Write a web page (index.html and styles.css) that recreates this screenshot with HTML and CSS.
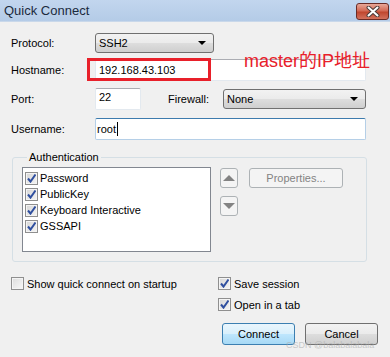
FILE: index.html
```html
<!DOCTYPE html>
<html lang="en">
<head>
    <meta charset="UTF-8">
    <meta name="viewport" content="width=device-width, initial-scale=1.0">
    <title>Quick Connect</title>
    <link rel="stylesheet" href="styles.css">
</head>
<body>
    <div class="window">
        <div class="titlebar">
            <span class="title">Quick Connect</span>
            <button class="close" type="button">
                <svg width="14" height="11" viewBox="0 0 14 11">
                    <path d="M2.5 1.5 L11.5 9.5 M11.5 1.5 L2.5 9.5" stroke="#4a3a38" stroke-width="4" stroke-linecap="round"/>
                    <path d="M2.5 1.5 L11.5 9.5 M11.5 1.5 L2.5 9.5" stroke="#ffffff" stroke-width="2" stroke-linecap="round"/>
                </svg>
            </button>
        </div>

        <div class="content">
            <div class="row row-protocol">
                <label class="label">Protocol:</label>
                <div class="select select-protocol"><span>SSH2</span><i class="arrow"></i></div>
            </div>
            <div class="row row-host">
                <label class="label">Hostname:</label>
                <div class="input input-wide">192.168.43.103</div>
            </div>
            <div class="row row-port">
                <label class="label">Port:</label>
                <div class="input input-port">22</div>
                <label class="label-fw">Firewall:</label>
                <div class="select select-fw"><span>None</span><i class="arrow"></i></div>
            </div>
            <div class="row row-user">
                <label class="label">Username:</label>
                <div class="input input-wide focused">root<span class="caret"></span></div>
            </div>

            <fieldset class="group">
                <legend>Authentication</legend>
                <div class="group-body">
                    <div class="list">
                        <div class="item"><span class="cb checked"></span>Password</div>
                        <div class="item"><span class="cb checked"></span>PublicKey</div>
                        <div class="item"><span class="cb checked"></span>Keyboard Interactive</div>
                        <div class="item"><span class="cb checked"></span>GSSAPI</div>
                    </div>
                    <div class="arrows">
                        <button class="btn-small" type="button" disabled><i class="tri up"></i></button>
                        <button class="btn-small" type="button" disabled><i class="tri down"></i></button>
                    </div>
                    <button class="btn-props" type="button" disabled>Properties...</button>
                </div>
            </fieldset>

            <div class="options">
                <div class="opt"><span class="cb"></span>Show quick connect on startup</div>
                <div class="opt"><span class="cb checked"></span>Save session</div>
                <div class="opt opt-tab"><span class="cb checked"></span>Open in a tab</div>
            </div>

            <div class="actions">
                <button class="btn btn-default" type="button">Connect</button>
                <button class="btn" type="button">Cancel</button>
            </div>
        </div>

        <div class="mark-box"></div>
        <div class="mark-text">master的IP地址</div>
        <div class="watermark">CSDN @balabalabala</div>
    </div>
</body>
</html>
```

FILE: styles.css
```css
body {
    margin: 0;
    padding: 0;
    font-family: 'Liberation Sans', Arial, sans-serif;
    font-size: 11px;
    color: #000000;
    background: #f0f0f0;
}

.window {
    position: relative;
    width: 390px;
    height: 357px;
    overflow: hidden;
    background: #f0f0f0;
}

/* title bar */
.titlebar {
    height: 22px;
    display: flex;
    align-items: center;
    justify-content: space-between;
    padding: 0 1px 0 4px;
    background: linear-gradient(180deg, #c2d6ee, #b4cbe7);
    border-bottom: 1px solid #c9d8ea;
    box-sizing: border-box;
}

.title {
    font-size: 13px;
    color: #1b2a3d;
}

.close {
    width: 33px;
    height: 17px;
    margin-top: 1px;
    padding: 0;
    border: 1px solid #6a2b25;
    border-radius: 3px;
    background: linear-gradient(180deg, #e8a899 0%, #d36a55 45%, #c0472f 55%, #d2715c 100%);
    display: flex;
    align-items: center;
    justify-content: center;
}

/* form */
.content {
    padding: 11px 12px 0 11px;
}

.row {
    display: flex;
    align-items: center;
}

.row-host { margin-top: 6px; }
.row-port { margin-top: 7px; }
.row-user { margin-top: 8px; }

.label {
    width: 84px;
    flex: none;
}

.label-fw {
    width: 55px;
    margin-left: 27px;
}

.select {
    height: 20px;
    box-sizing: border-box;
    border: 1px solid #707070;
    border-radius: 3px;
    background: linear-gradient(180deg, #f2f2f2 0%, #ebebeb 48%, #dddddd 52%, #cfcfcf 100%);
    display: flex;
    align-items: center;
    justify-content: space-between;
    padding: 0 7px 0 3px;
}

.select-protocol { width: 119px; }
.select-fw { width: 143px; }

.arrow {
    width: 0;
    height: 0;
    border-left: 4px solid transparent;
    border-right: 4px solid transparent;
    border-top: 4px solid #000000;
}

.input {
    height: 22px;
    box-sizing: border-box;
    background: #ffffff;
    border: 1px solid #e3e9ef;
    border-top-color: #abadb3;
    border-radius: 2px;
    display: flex;
    align-items: center;
    padding: 0 3px;
}

.input-wide { width: 271px; }
.input-port { width: 46px; align-items: flex-start; padding-top: 2px; }

.input.focused {
    border-color: #b5cfe7;
    border-top-color: #3d7bad;
    padding-left: 1px;
}

.caret {
    width: 1px;
    height: 14px;
    background: #000000;
    margin-left: 1px;
}

/* authentication group */
.group {
    margin: 11px 0 0 1px;
    padding: 3px 8px 9px 9px;
    width: 355px;
    box-sizing: border-box;
    border: 1px solid #d5dfe5;
    border-radius: 3px;
}

.group legend {
    padding: 0 2px;
    margin-left: 5px;
    line-height: 13px;
}

.group-body {
    display: flex;
    align-items: flex-start;
}

.list {
    width: 189px;
    height: 85px;
    box-sizing: border-box;
    border: 1px solid #828790;
    background: #ffffff;
    padding: 2px 0 0 2px;
}

.item {
    height: 16px;
    display: flex;
    align-items: center;
}

.item .cb {
    margin-right: 2px;
}

.arrows {
    display: flex;
    flex-direction: column;
    gap: 8px;
    margin: 1px 0 0 9px;
}

.btn-small {
    width: 18px;
    height: 20px;
    padding: 0;
    border: 1px solid #adb2b5;
    border-radius: 3px;
    background: #f4f4f4;
    display: flex;
    align-items: center;
    justify-content: center;
}

.tri {
    width: 0;
    height: 0;
    border-left: 6px solid transparent;
    border-right: 6px solid transparent;
}

.tri.up { border-bottom: 6px solid #838383; }
.tri.down { border-top: 6px solid #838383; }

.btn-props {
    width: 94px;
    height: 20px;
    margin: 1px 0 0 11px;
    padding: 0;
    border: 1px solid #adb2b5;
    border-radius: 3px;
    background: #f4f4f4;
    color: #838383;
    font-family: inherit;
    font-size: 11px;
}

/* checkboxes */
.cb {
    width: 13px;
    height: 13px;
    box-sizing: border-box;
    flex: none;
    border: 1px solid #8f8f8f;
    background: linear-gradient(135deg, #dcdcdc, #f8f8f8);
    box-shadow: inset 0 0 0 1px #f4f4f4;
}

.cb.checked {
    background: url("data:image/svg+xml,%3Csvg xmlns='http://www.w3.org/2000/svg' width='11' height='11'%3E%3Cpath d='M2 5.5 L4.5 8.5 L9.5 1.5' fill='none' stroke='%232f4f9f' stroke-width='2'/%3E%3C/svg%3E") center no-repeat,
        linear-gradient(135deg, #d6d6d6, #f4f4f4);
}

.options {
    display: grid;
    grid-template-columns: 207px 1fr;
    row-gap: 8px;
    margin-top: 15px;
}

.opt {
    display: flex;
    align-items: center;
    height: 13px;
}

.opt .cb {
    margin-right: 3px;
}

.opt-tab {
    grid-column: 2;
}

.actions {
    display: flex;
    justify-content: flex-end;
    gap: 10px;
    margin-top: 12px;
}

.btn {
    width: 73px;
    height: 22px;
    padding: 0 0 1px;
    border: 1px solid #707070;
    border-radius: 3px;
    background: linear-gradient(180deg, #f2f2f2 0%, #ebebeb 48%, #dddddd 52%, #cfcfcf 100%);
    font-family: inherit;
    font-size: 11px;
    color: #000000;
}

.btn-default {
    border-color: #3c7fb1;
    background: linear-gradient(180deg, #eaf6fd 0%, #d9f0fc 48%, #bee6fd 52%, #a7d9f5 100%);
}

/* annotation overlays */
.mark-box {
    position: absolute;
    left: 87px;
    top: 58px;
    width: 118px;
    height: 17px;
    border: 3px solid #e8202a;
}

.mark-text {
    position: absolute;
    left: 244px;
    top: 46px;
    font-family: 'Liberation Sans', 'Noto Sans CJK SC', sans-serif;
    font-size: 18px;
    color: #e8202a;
}

.watermark {
    position: absolute;
    left: 286px;
    top: 340px;
    font-size: 9px;
    color: rgba(170, 170, 170, 0.6);
}
```
